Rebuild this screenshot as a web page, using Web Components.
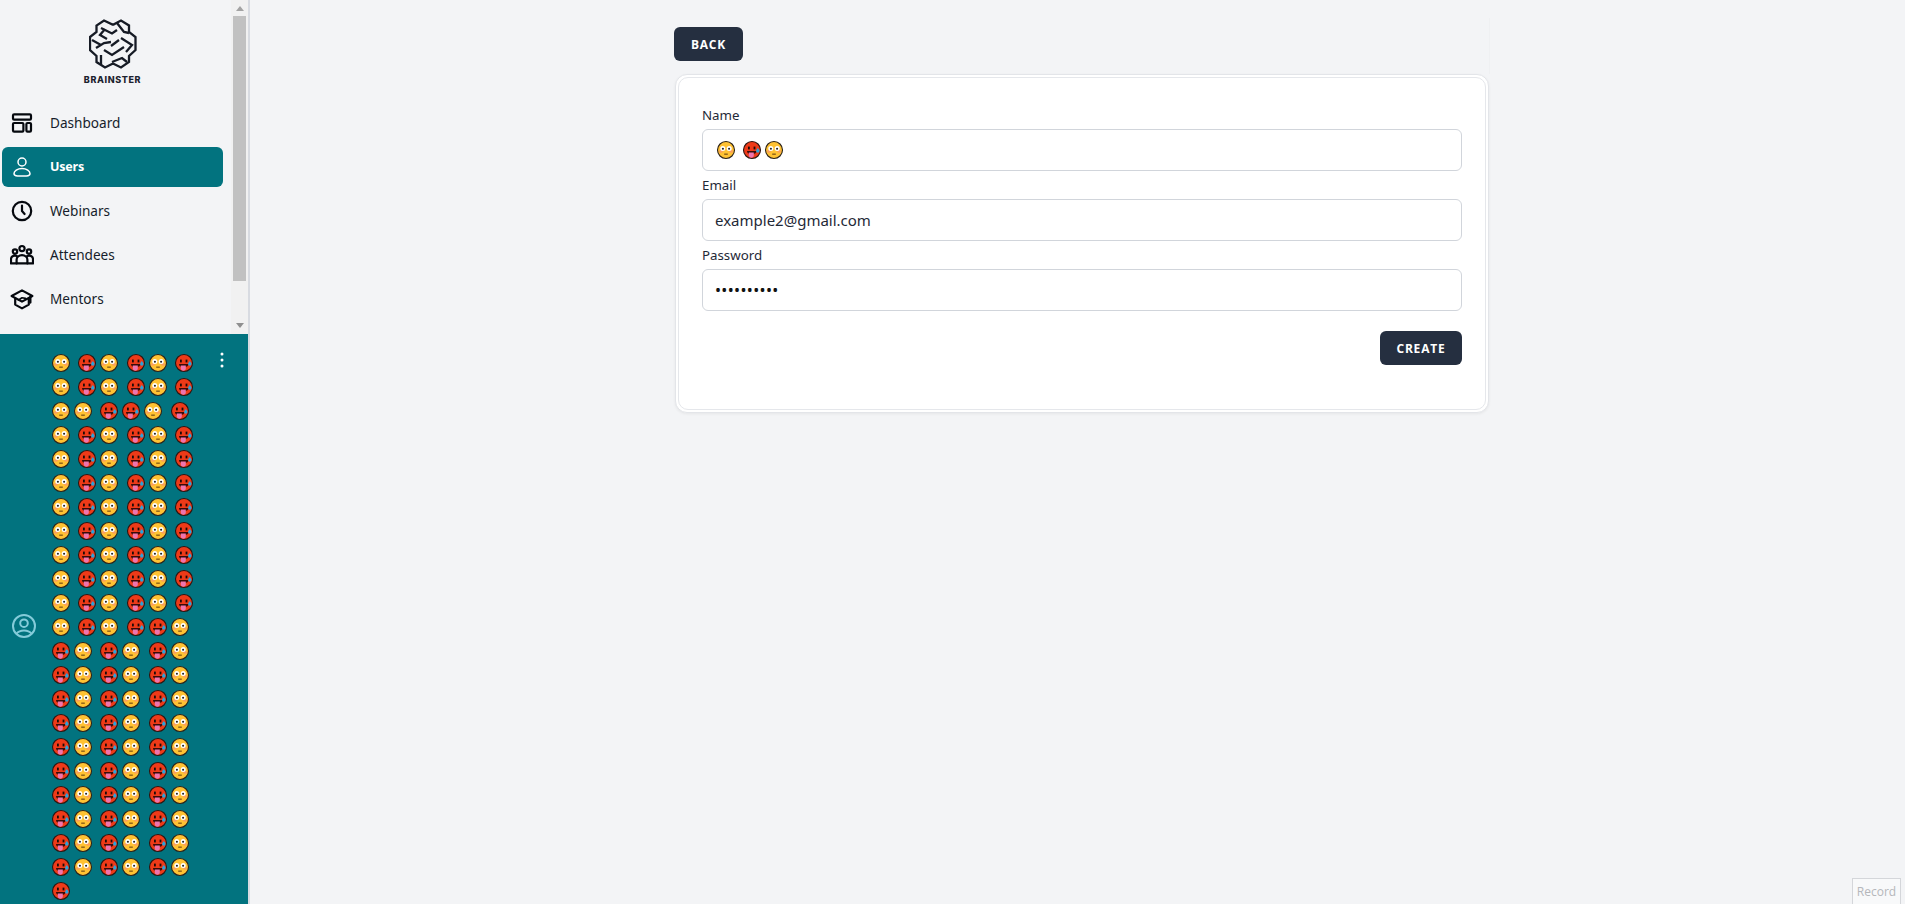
<!DOCTYPE html>
<html lang="en"><head><meta charset="utf-8"><title>Brainster</title>
<style>
html,body{margin:0;height:100%;background:#f3f4f6;font-family:"Noto Sans","Open Sans",sans-serif;overflow:hidden}
</style></head><body>
<app-shell>
  <app-sidebar slot="side">
    <brand-logo></brand-logo>
    <nav-item icon="dashboard">Dashboard</nav-item>
    <nav-item icon="user" active>Users</nav-item>
    <nav-item icon="clock">Webinars</nav-item>
    <nav-item icon="group">Attendees</nav-item>
    <nav-item icon="cap">Mentors</nav-item>
  </app-sidebar>
  <user-panel slot="panel"></user-panel>
  <user-form slot="main"></user-form>
</app-shell>
<record-tag>Record</record-tag>
<script>
const EMOJI={
Y:`<circle cx="11" cy="11" r="8.5" fill="#ffc233" stroke="#2b2118" stroke-width="1.1"/>
<ellipse cx="5.9" cy="12.4" rx="1.9" ry="1.4" fill="#fb9f5e"/><ellipse cx="16.1" cy="12.4" rx="1.9" ry="1.4" fill="#fb9f5e"/>
<circle cx="7.8" cy="9.6" r="2.5" fill="#fff"/><circle cx="14.2" cy="9.6" r="2.5" fill="#fff"/>
<circle cx="7.9" cy="9.8" r="1.05" fill="#222"/><circle cx="14.1" cy="9.8" r="1.05" fill="#222"/>
<rect x="9.2" y="14.6" width="3.6" height="1.1" fill="#6b4510"/>`,
R:`<circle cx="11" cy="11" r="8.5" fill="#ee3a18" stroke="#2a1512" stroke-width="1.1"/>
<rect x="7" y="7.6" width="1.8" height="2.8" fill="#1d0b08"/><rect x="12.6" y="7.6" width="1.8" height="2.8" fill="#1d0b08"/>
<path d="M6 12h9.400c0 1.600-1 2.600-2.400 2.800H8.400C7 14.600 6 13.600 6 12z" fill="#3a0b08"/>
<path d="M7.800 13.400h5v3.400c0 1.100-1.100 1.900-2.500 1.900s-2.500-.8-2.500-1.900z" fill="#ee74ad"/>
<path d="M16.800 9c1 1.300 1.700 2.100 1.700 3a1.700 1.700 0 0 1-3.400 0c0-.9.7-1.700 1.700-3z" fill="#2aa3dc"/>`};
const emojiSvg=k=>`<svg width="22" height="22" viewBox="0 0 22 22" style="display:block;flex:none">${EMOJI[k]}</svg>`;
const sp=`<span style="display:inline-block;width:4.4px;flex:none"> </span>`;

const ICONS={
dashboard:`<rect x="3" y="3.4" width="18" height="5.2" rx="1.1"/><rect x="3" y="12" width="10.4" height="8.6" rx="1.1"/><rect x="16.4" y="12" width="4.6" height="8.6" rx="1.1"/>`,
user:`<circle cx="12" cy="7" r="4"/><path d="M12 13.6c-4.6 0-8 2.6-8 5 0 1.6 1.4 2.4 3.600 2.400h8.800c2.200 0 3.600-.8 3.600-2.400 0-2.400-3.400-5-8-5z"/>`,
clock:`<circle cx="12" cy="12" r="9.2"/><path d="M12 6.6V12l2.6 3"/>`,
group:`<circle cx="12" cy="5.6" r="2.6"/><circle cx="5" cy="8.6" r="2.2"/><circle cx="19" cy="8.6" r="2.2"/><path d="M6.600 20.400v-3.600c0-2.600 2.400-4.600 5.400-4.600s5.400 2 5.400 4.600v3.600z"/><path d="M6.800 13c-.6-.3-1.200-.4-1.900-.4-2.200 0-3.900 1.600-3.900 3.600v4.200h5.600M17.200 13c.6-.3 1.200-.4 1.900-.4 2.200 0 3.900 1.600 3.900 3.600v4.200h-5.600"/>`,
cap:`<path d="M12 3.4L1.6 9 12 14.6 22.4 9z"/><path d="M5.200 11.400v6.200L12 21.400l6.800-3.800v-6.200"/><path d="M20.400 9.600v6"/><path d="M8.500 13l3.500-2.200 3.500.6" stroke-width="1.6"/>`};

const def=(n,html)=>customElements.define(n,class extends HTMLElement{
  constructor(){super();this.attachShadow({mode:'open'});}
  connectedCallback(){this.shadowRoot.innerHTML=typeof html==='function'?html(this):html;}
});

def('app-shell',`<style>
:host{display:grid;grid-template-columns:250px 1fr;height:904px;width:1905px}
.side{display:flex;flex-direction:column;height:904px;border-right:2px solid #d8dbe1;box-sizing:border-box;min-width:0}
.main{padding-left:424px;padding-top:18px;min-width:0}
</style><div class="side"><slot name="side"></slot><slot name="panel"></slot></div><div class="main"><slot name="main"></slot></div>`);

def('app-sidebar',`<style>
:host{display:grid;grid-template-columns:1fr 17px;height:334px;flex:none;background:#f3f4f6;color:#1f2937}
.list{display:flex;flex-direction:column;gap:4px;padding:0 8px 0 2px;min-width:0}
</style><div class="list"><slot></slot></div><fake-scroll></fake-scroll>`);

def('fake-scroll',`<style>
:host{display:flex;flex-direction:column;height:334px;background:#f1f1f1;align-items:center}
.a{width:0;height:0;border-left:4px solid transparent;border-right:4px solid transparent;flex:none}
.u{border-bottom:5px solid #a3a3a3;margin:6px 0 5px}
.d{border-top:5px solid #8f8f8f;margin:auto 0 6px}
.t{width:13px;height:265px;background:#c1c1c1;flex:none}
</style><div class="a u"></div><div class="t"></div><div class="a d"></div>`);

def('brand-logo',`<style>
:host{display:flex;flex-direction:column;align-items:center;height:99px;padding-top:19px;box-sizing:border-box}
svg{display:block}
span{font:800 9px/10px "Inter","Liberation Sans",sans-serif;letter-spacing:.62px;color:#1c222e;margin-top:6px}
</style><svg width="48" height="50" viewBox="0 0 48 50" fill="none" stroke="#161b25" stroke-width="2.3" stroke-linejoin="miter" stroke-linecap="butt">
<path d="M15 1.500l8.500 4h1l7.500-4 8 5V13l6.500 5v13L40 37v6l-8 5.500-8-4-8 4-8.500-5.500V37l-6.500-6V18L7.500 13V6.500z"/>
<path d="M12 9l11 5.500 5-3.500M28 4l7 9 5 1M3 21l9 5M7 29l8-5 7-1M22 27l8-6M32 19l11 7-6 7M15 31l8 5 12-8M12 36v10M23 43l10-4 5 4M16 10l-5 6 7 4"/>
</svg><span>BRAINSTER</span>`);

def('nav-item',el=>{const a=el.hasAttribute('active');return `<style>
:host{display:flex;align-items:center;height:40px;border-radius:6px;font-size:${a?12.5:13.6}px;letter-spacing:${a?-.2:0}px;font-weight:${a?700:400};color:${a?'#fff':'#161d2b'};background:${a?'#02737f':'transparent'};padding:0 0 1px 8px;box-sizing:border-box}
svg{flex:none;margin-right:16px;display:block}
</style><svg width="24" height="24" viewBox="0 0 24 24" fill="none" stroke="${a?'#fff':'#05080e'}" stroke-width="${a?1.5:2.2}" stroke-linejoin="round" stroke-linecap="round">${ICONS[el.getAttribute('icon')]}</svg><slot></slot>`});

def('emoji-row',el=>`<style>:host{display:flex;height:24px;align-items:center}</style>`+
  [...el.getAttribute('p')].map(c=>c===' '?sp:emojiSvg(c)).join(''));

const ROWS=["Y RY RY R","Y RY RY R","YY RRY R",...Array(8).fill("Y RY RY R"),"Y RY RRY",...Array(10).fill("RY RY RY"),"R"];
def('user-panel',`<style>
:host{display:grid;grid-template-columns:50px 1fr 29px;flex:1;min-height:0;background:#02737f;overflow:hidden}
.av{align-self:center;justify-self:center;margin:14px 2px 0 0}
.rows{padding-top:17px}
.more{padding:17px 0 0 0}
</style>
<svg class="av" width="26" height="26" viewBox="0 0 26 26" fill="none" stroke="#84cbd9" stroke-width="2"><circle cx="13" cy="13" r="11"/><circle cx="13" cy="10.2" r="3.8"/><path d="M5.400 20.600c2-2.400 4.600-3.200 7.600-3.200s5.600.8 7.600 3.200"/></svg>
<div class="rows">${ROWS.map(r=>`<emoji-row p="${r}"></emoji-row>`).join('')}</div>
<div class="more"><svg width="6" height="16" viewBox="0 0 6 16" fill="#fff"><circle cx="3" cy="2" r="1.5"/><circle cx="3" cy="8" r="1.5"/><circle cx="3" cy="14" r="1.5"/></svg></div>`);

def('dark-button',`<style>
:host{display:inline-flex;align-items:center;justify-content:center;height:34px;min-width:69px;padding:2px 16.5px 0;background:#252f40;color:#fff;border-radius:6px;font:700 12px/1 "Open Sans",sans-serif;letter-spacing:.8px;text-transform:uppercase;box-sizing:border-box}
</style><slot></slot>`);

def('user-form',`<style>
:host{display:block;width:815px}
.top{height:55.5px;padding-top:9px;box-sizing:border-box;box-shadow:1px 0 1px rgba(0,0,0,.015)}
.card{background:#fff;border:1px solid #e3e5e9;border-radius:12px;padding:2px;box-shadow:0 1px 3px rgba(0,0,0,.06);box-sizing:border-box;width:814px;height:339px;margin-left:1px}
.in{border:1px solid #e5e7eb;border-radius:10px;height:100%;box-sizing:border-box;padding:23px 23px 0 23px}
.act{display:flex;justify-content:flex-end;margin-top:20px}
.dots{font-size:16px;letter-spacing:.35px;color:#111}
</style>
<div class="top"><dark-button>Back</dark-button></div>
<div class="card"><div class="in">
<field-row label="Name"><emoji-row p="Y RY"></emoji-row></field-row>
<field-row label="Email">example2@gmail.com</field-row>
<field-row label="Password"><span class="dots">••••••••••</span></field-row>
<div class="act"><dark-button>Create</dark-button></div>
</div></div>`);

def('field-row',el=>`<style>
:host{display:block}
.l{font:400 13.3px/20px "Noto Sans",sans-serif;color:#1f2937;height:28px;padding-top:4px;box-sizing:border-box}
.b{display:flex;align-items:center;height:42px;border:1px solid #d1d5db;border-radius:6px;background:#fff;box-sizing:border-box;padding:1px 12px 0;font:400 15px/1 "Noto Sans",sans-serif;color:#1f2937}
</style><div class="l">${el.getAttribute('label')}</div><div class="b"><slot></slot></div>`);

def('record-tag',`<style>
:host{position:fixed;right:4px;bottom:0;width:49px;height:26px;border:1px solid #d4d6da;border-bottom:0;box-sizing:border-box;background:#f8f9fa;color:#b5b7bb;font:12px/26px "Open Sans",sans-serif;text-align:center}
</style><slot></slot>`);
</script></body></html>
